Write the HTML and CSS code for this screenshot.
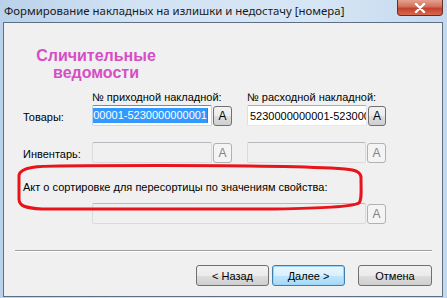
FILE: index.html
```html
<!DOCTYPE html>
<html lang="ru">
<head>
    <meta charset="UTF-8">
    <title>Формирование накладных на излишки и недостачу [номера]</title>
    <link rel="stylesheet" href="styles.css">
</head>
<body>
    <div class="window">
        <div class="titlebar">
            <span class="title">Формирование накладных на излишки и недостачу [номера]</span>
            <div class="close">
                <svg width="14" height="10" viewBox="0 0 14 10">
                    <path d="M3 1 L11 9 M11 1 L3 9" stroke="#ffffff" stroke-width="2.4" stroke-linecap="round"/>
                </svg>
            </div>
        </div>

        <div class="client">
            <div class="heading">Сличительные<br>ведомости</div>

            <div class="form">
                <div class="row captions">
                    <span class="label"></span>
                    <span class="caption">№ приходной накладной:</span>
                    <span class="caption">№ расходной накладной:</span>
                </div>

                <div class="row first">
                    <span class="label">Товары:</span>
                    <div class="field">
                        <div class="box focused">
                            <div class="text end"><span class="sel">5230000000001-5230000000001</span></div>
                            <span class="caret"></span>
                        </div>
                        <button class="pick">A</button>
                    </div>
                    <div class="field">
                        <div class="box">
                            <div class="text"><span class="value">5230000000001-5230000000001</span></div>
                        </div>
                        <button class="pick">A</button>
                    </div>
                </div>

                <div class="row second">
                    <span class="label">Инвентарь:</span>
                    <div class="field">
                        <div class="box disabled"></div>
                        <button class="pick disabled">A</button>
                    </div>
                    <div class="field">
                        <div class="box disabled"></div>
                        <button class="pick disabled">A</button>
                    </div>
                </div>

                <div class="act-label">Акт о сортировке для пересортицы по значениям свойства:</div>

                <div class="row third">
                    <span class="label"></span>
                    <div class="field wide">
                        <div class="box disabled"></div>
                        <button class="pick disabled">A</button>
                    </div>
                </div>
            </div>

            <div class="footer">
                <div class="separator"></div>
                <div class="buttons">
                    <button class="btn">&lt; Назад</button>
                    <button class="btn default">Далее &gt;</button>
                    <button class="btn cancel">Отмена</button>
                </div>
            </div>
        </div>

        <!-- red hand-drawn mark around the third option -->
        <svg class="mark" width="447" height="298" viewBox="0 0 447 298">
            <path d="M60 166 C38 166 21 167 19 175 L19 199 C19 206 25 208 42 209 L275 209 C320 208 352 207 359 203 C362 200 361 190 361 178 C361 172 356 170 345 169 C300 166 200 165 60 166 Z"
                  fill="none" stroke="#e8141c" stroke-width="3" stroke-linejoin="round"/>
        </svg>
    </div>
</body>
</html>
```

FILE: styles.css
```css
body {
    margin: 0;
    width: 447px;
    height: 298px;
    overflow: hidden;
    font-family: "Liberation Sans", Arial, sans-serif;
    font-size: 11px;
    color: #000000;
}

.window {
    position: relative;
    width: 447px;
    height: 298px;
    background: linear-gradient(to right, #b9d1ea 0%, #d3e3f4 30%, #d7e6f5 70%, #c4d8ee 100%);
    display: flex;
    flex-direction: column;
}

.titlebar {
    height: 22px;
    display: flex;
    align-items: flex-start;
    justify-content: space-between;
}

.title {
    font-family: "Noto Sans", "Open Sans", sans-serif;
    font-size: 11.4px;
    line-height: 22px;
    margin-left: 4px;
    color: #1a1a1a;
}

.close {
    width: 44px;
    height: 15px;
    margin-right: 4px;
    border: 1px solid #6b2a23;
    border-top: none;
    border-radius: 0 0 4px 4px;
    background: linear-gradient(to bottom, #e6a08f 0%, #d0705d 45%, #c2412b 55%, #d86a4f 100%);
    display: flex;
    align-items: center;
    justify-content: center;
}

.client {
    box-sizing: border-box;
    margin-left: 3px;
    width: 440px;
    height: 275px;
    border: 1px solid #5d6f84;
    background: #f0f0f0;
    display: flex;
    flex-direction: column;
}

.heading {
    width: 150px;
    margin: 24px 0 0 17px;
    text-align: center;
    font-size: 16px;
    font-weight: bold;
    line-height: 17px;
    color: #d54ec5;
}

.form {
    padding-left: 19px;
}

.row {
    display: grid;
    grid-template-columns: 54px 140px 139px;
    column-gap: 15px;
}

.captions {
    margin-top: 10px;
    line-height: 13px;
}

.first {
    margin-top: 1px;
}

.second {
    margin-top: 16px;
}

.third {
    margin-top: 9px;
    grid-template-columns: 54px 294px;
}

.label {
    padding-top: 6px;
    line-height: 13px;
    white-space: nowrap;
}

.act-label {
    margin-top: 18px;
    line-height: 13px;
}

.field {
    display: flex;
    gap: 1px;
    align-items: flex-start;
}

.box {
    box-sizing: border-box;
    width: 120px;
    height: 21px;
    border: 1px solid #abadb3;
    border-color: #abadb3 #e2e3ea #e3e9ef #dbdfe6;
    border-radius: 2px;
    background: #ffffff;
    display: flex;
    align-items: center;
    white-space: nowrap;
}

.wide .box {
    width: 275px;
}

.text {
    flex: 1;
    min-width: 0;
    display: flex;
    overflow: hidden;
}

.text.end {
    justify-content: flex-end;
}

.box.focused {
    border-color: #5e8fd0 #b7d0ee #c7dcf2 #b7d0ee;
    padding-right: 3px;
}

.sel {
    flex-shrink: 0;
    background: #3399ff;
    color: #ffffff;
    line-height: 15px;
}

.caret {
    flex-shrink: 0;
    width: 1px;
    height: 15px;
    background: #c06000;
}

.value {
    flex-shrink: 0;
    padding-left: 2px;
}

.box.disabled {
    background: #f0f0f0;
    border-color: #b5b8bc #dadbdd #dadbdd #dadbdd;
}

.pick {
    box-sizing: border-box;
    width: 19px;
    height: 20px;
    padding: 0;
    margin-top: 1px;
    border: 1px solid #707070;
    border-radius: 3px;
    background: linear-gradient(to bottom, #f2f2f2 0%, #ebebeb 50%, #dddddd 51%, #cfcfcf 100%);
    font-family: "Liberation Sans", Arial, sans-serif;
    font-size: 12px;
    color: #000000;
}

.pick.disabled {
    border-color: #adb2b5;
    background: #f4f4f4;
    color: #838383;
}

.footer {
    margin-top: auto;
}

.separator {
    margin: 0 10px 0 11px;
    height: 1px;
    background: #a0a0a0;
    border-bottom: 1px solid #ffffff;
}

.buttons {
    display: flex;
    justify-content: flex-end;
    gap: 3px;
    margin: 13px 10px 10px 0;
}

.btn {
    box-sizing: border-box;
    width: 73px;
    height: 21px;
    padding: 0;
    border: 1px solid #707070;
    border-radius: 3px;
    background: linear-gradient(to bottom, #f2f2f2 0%, #ebebeb 50%, #dddddd 51%, #cfcfcf 100%);
    font-family: "Liberation Sans", Arial, sans-serif;
    font-size: 11px;
    color: #000000;
}

.btn.default {
    border-color: #3c7fb1;
    background: linear-gradient(to bottom, #eaf6fd 0%, #d9f0fc 50%, #bee6fd 51%, #a7d9f5 100%);
    box-shadow: inset 0 0 0 1px #9ed4f7;
}

.btn.cancel {
    width: 74px;
    margin-left: 10px;
}

.mark {
    position: absolute;
    left: 0;
    top: 0;
    pointer-events: none;
}
```
